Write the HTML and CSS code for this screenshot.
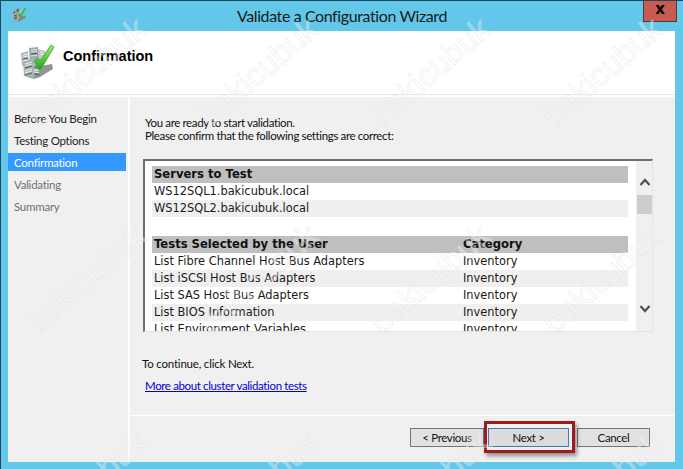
FILE: index.html
```html
<!DOCTYPE html>
<html lang="en">
<head>
<meta charset="utf-8">
<title>Validate a Configuration Wizard</title>
<link rel="stylesheet" href="styles.css">
</head>
<body>
<div class="window">
  <header class="titlebar">
    <svg class="app-icon" width="17" height="16" viewBox="0 0 40 38">
      <path d="M3 9l7-2 1 13-7 2z" fill="#aeb6b8"/>
      <path d="M11 4l9-1v13l-8 1z" fill="#98a1a4"/>
      <path d="M20 5l7 2v13h-7z" fill="#b9c0c3"/>
      <path d="M5 17l10-3 7 1v18l-7 2-9-3z" fill="#a5adb0"/>
      <path d="M15 35l7-2 13-8-1-5-12 2z" fill="#7f8a72"/>
      <path d="M5 12l5-1M5 15l5-1M13 7l6-1M13 10l6-1M7 21l7-2M7 25l7-2M7 29l7-2" stroke="#3f4649" stroke-width="2"/>
      <path d="M16 17l4-3 2 3L33 1l3 2-13 22h-3z" fill="#3cb838"/>
    </svg>
    <div class="title">Validate a Configuration Wizard</div>
    <button class="close" aria-label="Close">x</button>
  </header>
  <div class="client">
    <div class="head">
      <svg class="head-icon" width="40" height="38" viewBox="0 0 40 38">
        <defs>
          <linearGradient id="check" x1="0" y1="0" x2="0" y2="1">
            <stop offset="0" stop-color="#a6e86f"/>
            <stop offset=".6" stop-color="#55c83c"/>
            <stop offset="1" stop-color="#2ba02a"/>
          </linearGradient>
        </defs>
        <path d="M3 9l7-2 1 13-7 2z" fill="#b3babd"/>
        <path d="M11 4l9-1v13l-8 1z" fill="#9aa3a6"/>
        <path d="M20 5l7 2v13h-7z" fill="#c0c6c8"/>
        <path d="M5 17l10-3 7 1v18l-7 2-9-3z" fill="#aab1b4"/>
        <path d="M15 35l7-2 13-8-1-5-12 2z" fill="#8f9693"/>
        <path d="M5 11l5-1M5 13l5-1M5 17l5-1M13 6l6-.5M13 8l6-.5M13 12l6-.5M22 8l4 1M22 10l4 1M7 20l7-2M7 22l7-2M7 27l7-2M7 29l7-2M16 18l5 .5M16 20l5 .5M16 26l5 .5M16 28l5 .5" stroke="#e9ecec" stroke-width="1"/>
        <path d="M5 15l5-1M13 10l6-.5M7 24l7-2M7 31l7-2M16 23l5 .5M16 30l5 .5" stroke="#50585b" stroke-width="1"/>
        <path d="M16 17l4-3 2 3L33 1l3 2-13 22h-3z" fill="url(#check)" stroke="#3da035" stroke-width=".8"/>
      </svg>
      <h1>Confirmation</h1>
    </div>
    <div class="body">
      <nav class="nav">
        <div class="step">Before You Begin</div>
        <div class="step">Testing Options</div>
        <div class="step selected">Confirmation</div>
        <div class="step disabled">Validating</div>
        <div class="step disabled">Summary</div>
      </nav>
      <main class="main">
        <div class="content">
          <p class="intro">You are ready to start validation.<br>Please confirm that the following settings are correct:</p>
          <div class="report">
            <div class="report-view">
              <div class="row heading"><span>Servers to Test</span></div>
              <div class="row"><span>WS12SQL1.bakicubuk.local</span></div>
              <div class="row alt"><span>WS12SQL2.bakicubuk.local</span></div>
              <div class="row heading second"><span>Tests Selected by the User</span><span>Category</span></div>
              <div class="row"><span>List Fibre Channel Host Bus Adapters</span><span>Inventory</span></div>
              <div class="row alt"><span>List iSCSI Host Bus Adapters</span><span>Inventory</span></div>
              <div class="row"><span>List SAS Host Bus Adapters</span><span>Inventory</span></div>
              <div class="row alt"><span>List BIOS Information</span><span>Inventory</span></div>
              <div class="row"><span>List Environment Variables</span><span>Inventory</span></div>
            </div>
            <div class="scrollbar">
              <svg class="chevron up" width="12" height="8" viewBox="0 0 12 8"><path d="M1.500 7l4.500-5 4.500 5" fill="none" stroke="#505050" stroke-width="2.200"/></svg>
              <div class="thumb"></div>
              <svg class="chevron down" width="12" height="8" viewBox="0 0 12 8"><path d="M1.500 1l4.500 5 4.500-5" fill="none" stroke="#505050" stroke-width="2.200"/></svg>
            </div>
          </div>
          <p class="continue">To continue, click Next.</p>
          <a class="more" href="#">More about cluster validation tests</a>
        </div>
        <footer class="footer">
          <button class="btn">&lt; Previous</button>
          <button class="btn primary">Next &gt;</button>
          <button class="btn cancel">Cancel</button>
        </footer>
      </main>
    </div>
  </div>
  <div class="callout"></div>
  <div class="marks" aria-hidden="true">
    <span class="mark">bakicubuk</span><span class="mark">bakicubuk</span><span class="mark">bakicubuk</span><span class="mark">bakicubuk</span>
    <span class="mark">bakicubuk</span><span class="mark">bakicubuk</span><span class="mark">bakicubuk</span><span class="mark">bakicubuk</span>
    <span class="mark">bakicubuk</span><span class="mark">bakicubuk</span><span class="mark">bakicubuk</span><span class="mark">bakicubuk</span>
  </div>
</div>
</body>
</html>
```
FILE: styles.css
```css
* { box-sizing: border-box; }
html, body { margin: 0; padding: 0; }
body { width: 683px; height: 469px; overflow: hidden; font-family: Lato, "Liberation Sans", sans-serif; font-size: 11.500px; color: #111; }
.window { position: relative; width: 683px; height: 469px; background: #62c7e8; border-top: 1px solid #1f4a5c; border-left: 1px solid #1f4a5c; display: flex; flex-direction: column; overflow: hidden; }
.titlebar { height: 30px; flex: none; display: flex; align-items: flex-start; position: relative; }
.app-icon { margin: 6px 0 0 10px; }
.title { position: absolute; left: 0; right: 0; top: 5px; text-align: center; font-size: 16px; line-height: 20px; letter-spacing: -.4px; color: #1a1a1a; }
.close { position: absolute; right: 6px; top: 0; width: 34px; height: 21px; padding: 0 0 4px; background: #c75b50; border: 1px solid #4a3a3a; border-top: 0; color: #000; font: bold 15px/16px "DejaVu Sans", sans-serif; }
.client { margin: 0 8px 7px 7px; flex: 1; background: #f0f0f0; display: flex; flex-direction: column; min-height: 0; }
.head { height: 64px; flex: none; background: #fff; display: flex; align-items: flex-start; border-bottom: 1px solid #e6e6e6; }
.head-icon { margin: 13px 0 0 10px; }
.head h1 { margin: 15px 0 0 5px; font-size: 14.500px; line-height: 20px; font-weight: 700; color: #000; font-family: "Liberation Sans", sans-serif; }
.body { flex: 1; display: flex; border-top: 2px solid #fff; min-height: 0; }
.nav { width: 122px; flex: none; border-right: 2px solid #fff; padding-top: 11px; letter-spacing: -.25px; }
.step { height: 22px; padding: 2px 6px 0; line-height: 17px; color: #222; width: 118px; }
.step.selected { background: #3399ff; color: #fff; height: 18px; margin: 1px 0 3px; padding-top: 1px; }
.step.disabled { color: #707070; }
.main { flex: 1; display: flex; flex-direction: column; }
.content { flex: 1; padding: 19px 0 0 12px; border-bottom: 1px solid #fff; }
.intro { margin: 0 0 0 3px; line-height: 13px; letter-spacing: -.37px; color: #111; }
.report { width: 510px; height: 173px; margin: 17px 0 0 1px; background: #fff; border: 1px solid #e4e4e4; border-top: 2px solid #6e6e6e; border-left: 2px solid #6e6e6e; display: flex; }
.report-view { width: 491px; height: 170px; padding: 5px 0 0 7px; overflow: hidden; font: 11.400px/17px "DejaVu Sans", sans-serif; color: #1a1a1a; background: #fff; }
.row { height: 17px; display: flex; padding-left: 2px; width: 476px; white-space: nowrap; }
.row span:first-child { width: 309px; flex: none; }
.row.alt { background: #efefef; }
.row.heading { background: #bfbfbf; font-weight: 700; font-size: 11.600px; color: #111; }
.row.second { margin-top: 19px; }
.scrollbar { flex: 1; background: #f0f0f0; display: flex; flex-direction: column; padding: 17px 0 0 1px; }
.chevron { display: block; margin: 0 auto; flex: none; }
.thumb { height: 19px; margin-top: 9px; background: #cdcdcd; flex: none; }
.chevron.down { margin-top: 91px; }
.continue { margin: 24px 0 0; line-height: 16px; letter-spacing: -.2px; }
.more { display: block; margin: 6px 0 0 3px; width: max-content; line-height: 16px; letter-spacing: -.37px; color: #0000d8; text-decoration: underline; }
.footer { height: 46px; flex: none; display: flex; padding: 12px 0 0 280px; }
.btn { height: 19px; width: 74px; padding: 0; background: #e1e1e1; border: 1px solid #767676; font: inherit; letter-spacing: -.35px; color: #111; margin-right: 4px; }
.btn.primary { width: 81px; border-color: #3c7fb1; margin-right: 8px; background: #dcdcdc; }
.btn.cancel { width: 73px; margin: 0; }
.callout { position: absolute; left: 483px; top: 420px; width: 91px; height: 32px; border: 3px solid #9e1b20; box-shadow: 2px 3px 4px rgba(0,0,0,.4); }
.marks { position: absolute; left: -1px; top: -33px; display: grid; grid-template-columns: repeat(4, 172px); grid-auto-rows: 207px; justify-items: center; align-items: center; pointer-events: none; }
.mark { display: block; transform: rotate(-41deg); font: 32.500px/40px "Liberation Sans", sans-serif; color: rgba(255,255,255,.32); -webkit-text-stroke: 1px rgba(222,222,222,.38); }
```
